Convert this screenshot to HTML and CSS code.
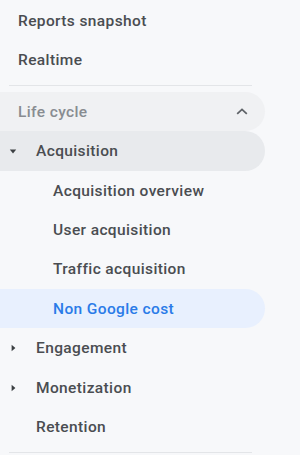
FILE: index.html
```html
<!DOCTYPE html>
<html>
<head>
<meta charset="utf-8">
<link rel="stylesheet" href="styles.css">
</head>
<body>
<nav class="sidebar">
  <div class="item top">Reports snapshot</div>
  <div class="item top">Realtime</div>
  <div class="divider"></div>
  <div class="item section">
    <span class="label">Life cycle</span>
    <svg class="chev" width="12" height="7" viewBox="0 0 12 7"><path d="M1.2 5.8 L6 1.4 L10.8 5.8" fill="none" stroke="#5f6368" stroke-width="1.8"/></svg>
  </div>
  <div class="item level1 expanded">
    <span class="caret"><svg width="8" height="5" viewBox="0 0 8 5"><path d="M0.8 0.6 L7.2 0.6 L4 4.4 Z" fill="#3c4043"/></svg></span>
    <span class="label">Acquisition</span>
  </div>
  <div class="item level2">Acquisition overview</div>
  <div class="item level2">User acquisition</div>
  <div class="item level2">Traffic acquisition</div>
  <div class="item level2 active">Non Google cost</div>
  <div class="item level1">
    <span class="caret"><svg width="5" height="8" viewBox="0 0 5 8"><path d="M0.6 0.8 L4.4 4 L0.6 7.2 Z" fill="#3c4043"/></svg></span>
    <span class="label">Engagement</span>
  </div>
  <div class="item level1">
    <span class="caret"><svg width="5" height="8" viewBox="0 0 5 8"><path d="M0.6 0.8 L4.4 4 L0.6 7.2 Z" fill="#3c4043"/></svg></span>
    <span class="label">Monetization</span>
  </div>
  <div class="item level1">
    <span class="caret"></span>
    <span class="label">Retention</span>
  </div>
  <div class="divider"></div>
</nav>
</body>
</html>
```
FILE: styles.css
```css
html, body {
  margin: 0;
  padding: 0;
  background: #f7f8fa;
}
body {
  font-family: Roboto, "Noto Sans", "Liberation Sans", sans-serif;
  width: 300px;
  height: 455px;
  overflow: hidden;
}
.sidebar {
  width: 265px;
  padding-top: 1.3px;
  display: flex;
  flex-direction: column;
}
.item {
  height: 39.4px;
  display: flex;
  align-items: center;
  font-size: 15.5px;
  font-weight: 500;
  letter-spacing: 0.38px;
  color: #4a4d51;
  border-radius: 0 20px 20px 0;
  box-sizing: border-box;
  white-space: nowrap;
}
.top {
  padding-left: 18px;
}
.divider {
  height: 1px;
  background: #e3e5e8;
  margin: 5px 0 6px 9px;
  width: 243px;
}
.section {
  padding-left: 18px;
  padding-right: 17px;
  background: #f0f1f3;
  color: #888c91;
  justify-content: space-between;
}
.chev {
  display: block;
}
.level1 {
  padding-left: 9px;
}
.caret {
  width: 8px;
  height: 10px;
  margin-right: 19px;
  display: flex;
  align-items: center;
  justify-content: center;
}
.caret svg {
  display: block;
}
.expanded {
  background: #e8eaed;
}
.level2 {
  padding-left: 53px;
}
.active {
  background: #e8f0fe;
  color: #2a7be8;
}
```
